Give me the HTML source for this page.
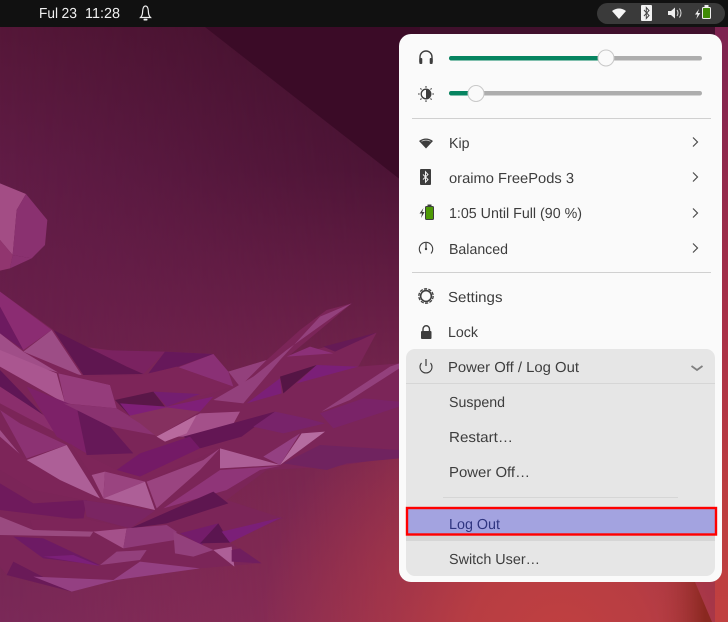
<!DOCTYPE html>
<html><head><meta charset="utf-8"><style>
html,body{margin:0;padding:0;background:#111}
svg{display:block}
text{font-family:"Liberation Sans",sans-serif;font-size:14.5px;fill:#3d3d3d;text-rendering:geometricPrecision}
</style></head><body>
<svg width="728" height="622" viewBox="0 0 728 622" xmlns="http://www.w3.org/2000/svg">
<defs>
<linearGradient id="cl" gradientUnits="userSpaceOnUse" x1="0" y1="27" x2="0" y2="622">
<stop offset="0" stop-color="#551738"/><stop offset=".24" stop-color="#611c46"/><stop offset=".63" stop-color="#6e214e"/><stop offset="1" stop-color="#7a2958"/>
</linearGradient>
<linearGradient id="cr" gradientUnits="userSpaceOnUse" x1="0" y1="27" x2="0" y2="622">
<stop offset="0" stop-color="#40102c"/><stop offset=".24" stop-color="#4c1435"/><stop offset=".5" stop-color="#6a2047"/><stop offset=".63" stop-color="#76264f"/><stop offset="1" stop-color="#8a2c52"/>
</linearGradient>
<linearGradient id="mh" gradientUnits="userSpaceOnUse" x1="0" y1="0" x2="400" y2="0"><stop offset="0" stop-color="#000"/><stop offset="1" stop-color="#fff"/></linearGradient>
<mask id="mk" maskUnits="userSpaceOnUse" x="0" y="0" width="728" height="622"><rect width="728" height="622" fill="url(#mh)"/></mask>
<linearGradient id="rgt" gradientUnits="userSpaceOnUse" x1="725" y1="30" x2="725" y2="622"><stop offset="0" stop-color="#7d2350"/><stop offset=".5" stop-color="#a93048"/><stop offset=".8" stop-color="#bd3d3f"/><stop offset="1" stop-color="#c04040"/></linearGradient>
<radialGradient id="glow" gradientUnits="userSpaceOnUse" cx="560" cy="640" r="300"><stop offset="0" stop-color="#c04040"/><stop offset=".3" stop-color="#c04040" stop-opacity=".85"/><stop offset=".55" stop-color="#c04040" stop-opacity=".5"/><stop offset="1" stop-color="#c04040" stop-opacity="0"/></radialGradient>
<linearGradient id="wdg" gradientUnits="userSpaceOnUse" x1="650" y1="0" x2="705" y2="0"><stop offset="0" stop-color="#bd4040" stop-opacity="0"/><stop offset="1" stop-color="#8a2820"/></linearGradient>
</defs>
<rect width="728" height="622" fill="url(#cl)"/>
<rect width="728" height="622" fill="url(#cr)" mask="url(#mk)"/>
<rect width="728" height="622" fill="url(#glow)"/>
<polygon points="205,27 420,27 420,195" fill="#3b0b27"/>
<rect x="715" y="27" width="13" height="595" fill="url(#rgt)"/>
<polygon points="650,582 695,582 712,622 660,622" fill="url(#wdg)"/>

<g transform="translate(0,170) scale(.33333)">
<polygon points="0,40 78,72 50,120 38,255 0,210" fill="#a34d85"/>
<polygon points="78,72 142,150 135,225 95,265 38,255 50,120" fill="#8a3170"/>
<polygon points="38,255 95,265 30,295" fill="#8a3170"/>
<polygon points="0,210 38,255 30,295 0,302" fill="#91356f"/>

<polygon points="0,365 160,480 250,530 400,550 500,545 640,552 685,605 800,570 900,480 980,420 1055,400 960,480 870,555 960,535 1130,488 1075,590 1198,580 1198,860 1000,890 800,900 680,990 850,1045 680,1110 780,1180 600,1195 350,1230 215,1265 20,1215 0,1190" fill="#7b2558"/>
<polygon points="300,540 495,545 430,612 250,530" fill="#7a2260"/>
<polygon points="160,480 250,615 430,612 380,590 250,525" fill="#5f1650"/>
<polygon points="495,545 640,552 535,590 445,610" fill="#66185a"/>
<polygon points="640,552 685,605 700,650 535,592" fill="#8a3075"/>
<polygon points="685,605 800,570 720,650" fill="#93407c"/>
<polygon points="0,365 155,480 70,540 0,410" fill="#8b2c72"/>
<polygon points="0,410 70,540 0,490" fill="#6d1a60"/>
<polygon points="155,480 245,615 175,608 70,545" fill="#9d4d86"/>
<polygon points="0,490 70,545 175,608 0,560" fill="#a04e88"/>
<polygon points="0,540 170,610 195,700 0,590" fill="#aa5690"/>
<polygon points="175,610 330,645 350,715 195,700" fill="#953c7b"/>
<polygon points="70,545 250,620 430,615 530,590 700,650 600,680 460,665 345,690 330,645 175,608" fill="#7d2559"/>
<polygon points="0,600 130,735 0,650" fill="#5f1655"/>
<polygon points="0,650 130,735 190,800 0,700" fill="#8a2e6c"/>
<polygon points="80,650 230,710 260,850 170,800" fill="#7d2168"/>
<polygon points="230,710 330,770 400,850 260,855" fill="#661858"/>
<polygon points="190,700 350,715 490,800 330,770" fill="#8a3270"/>
<polygon points="345,690 460,665 495,710 390,738" fill="#5a1748"/>
<polygon points="460,665 600,672 500,710" fill="#741e70"/>
<polygon points="360,700 500,710 640,680 600,725 390,738" fill="#7f1f78"/>
<polygon points="640,690 760,620 860,540 1055,400 960,440 840,570 730,700" fill="#93407c"/>
<polygon points="740,700 840,625 845,670" fill="#7b1f78"/>
<polygon points="840,620 950,585 850,670" fill="#551545"/>
<polygon points="950,585 1075,590 890,640" fill="#7b1f78"/>
<polygon points="860,560 930,530 1000,550" fill="#8c3078"/>
<polygon points="970,530 1130,488 1005,545" fill="#651a55"/>
<polygon points="385,738 500,712 600,725 470,800 420,760" fill="#85305f"/>
<polygon points="600,730 720,725 690,780 550,800 470,800" fill="#a4508a"/>
<polygon points="470,800 590,735 560,790 495,815" fill="#b86a9e"/>
<polygon points="550,800 825,725 725,800 600,835" fill="#631654"/>
<polygon points="350,900 420,850 570,800 600,835 420,920" fill="#741a66"/>
<polygon points="0,720 80,865 200,825 60,760" fill="#8c3273"/>
<polygon points="0,780 70,865 0,820" fill="#a04e88"/>
<polygon points="210,820 260,855 350,900 420,920 600,835 660,835 440,935 315,905 275,915" fill="#7d2559"/>
<polygon points="0,800 80,870 180,930 310,985 465,1022 250,990 100,960 0,900" fill="#7d2559"/>
<polygon points="80,870 200,825 300,985 180,930" fill="#ad5f97"/>
<polygon points="275,915 315,905 310,985" fill="#a4508a"/>
<polygon points="315,905 435,935 310,985" fill="#9a4480"/>
<polygon points="310,985 435,935 465,1020" fill="#ad5f97"/>
<polygon points="440,935 610,870 660,835 600,900 470,1015" fill="#9a4480"/>
<polygon points="490,1015 660,900 840,888 780,900 680,960" fill="#8f3578"/>
<polygon points="660,835 840,885 660,895" fill="#ad5f97"/>
<polygon points="790,860 900,790 840,885" fill="#944082"/>
<polygon points="840,885 905,790 975,785" fill="#b56ca0"/>
<polygon points="850,880 960,825 1198,840 1198,865 1040,880 980,900" fill="#70235f"/>
<polygon points="960,730 1090,685 1198,695 1198,710 1000,775" fill="#7a2368"/>
<polygon points="965,725 1170,590 1198,580 1198,595 1050,690" fill="#93407c"/>
<polygon points="760,770 825,725 920,745 975,760 850,790" fill="#78236a"/>
<polygon points="0,940 100,1000 260,990 250,1050 0,1020" fill="#6f1a5c"/>
<polygon points="250,990 465,1022 390,1075 260,1040" fill="#7a2562"/>
<polygon points="390,1075 640,965 685,1000 500,1060" fill="#5e1650"/>
<polygon points="90,1050 250,1045 390,1075 280,1085 100,1080" fill="#7d2559"/>
<polygon points="0,1040 100,1080 280,1085 270,1100 0,1095" fill="#9a4a80"/>
<polygon points="280,1085 380,1075 370,1135" fill="#a4508a"/>
<polygon points="380,1075 500,1065 530,1085 525,1110 370,1135" fill="#8f3a78"/>
<polygon points="540,1090 655,1060 605,1125" fill="#741c6a"/>
<polygon points="600,1120 655,1060 690,1118" fill="#5b1550"/>
<polygon points="665,1085 845,1042 690,1118" fill="#7b1f78"/>
<polygon points="520,1085 640,1140 580,1160 525,1150" fill="#93407c"/>
<polygon points="640,1140 695,1130 703,1190" fill="#ad5f97"/>
<polygon points="695,1140 720,1135 785,1180 695,1175" fill="#701e5e"/>
<polygon points="40,1100 130,1105 300,1185 130,1165" fill="#6d1a64"/>
<polygon points="130,1160 220,1155 300,1188" fill="#7b1f78"/>
<polygon points="300,1185 350,1145 440,1140 420,1170" fill="#93407c"/>
<polygon points="20,1215 40,1175 215,1265" fill="#6a1a58"/>
<polygon points="100,1220 340,1230 420,1175 600,1195 350,1230 215,1265" fill="#944082"/>
</g>

<!-- top bar -->
<rect width="728" height="27" fill="#111"/>
<text x="39" y="18" textLength="19" lengthAdjust="spacingAndGlyphs" style="fill:#f0f0f0">Ful</text>
<text x="61.500" y="18" textLength="15.500" lengthAdjust="spacingAndGlyphs" style="fill:#f0f0f0">23</text>
<text x="85" y="18" textLength="35" lengthAdjust="spacingAndGlyphs" style="fill:#f0f0f0">11:28</text>
<path d="M140.500 17.500 c2-2 2-4 2.200-7 c.3-3 1.500-4.500 2.800-4.500 s2.500 1.500 2.800 4.500 c.2 3 .2 5 2.200 7z" fill="none" stroke="#eee" stroke-width="1.200"/>
<rect x="143.500" y="18.800" width="4" height="1.700" rx=".8" fill="#eee"/>

<rect x="597" y="3" width="128" height="21" rx="10.500" fill="#3a3a3a"/>
<path d="M612 11 q7-5 14 0 l-7 8z" fill="#f5f5f5"/>
<rect x="641" y="5" width="11" height="16" rx="1" fill="#f2f2f2"/>
<path d="M644 10 l5 5.500 -2.700 3 v-11 l2.700 3 -5 5.500" fill="none" stroke="#444" stroke-width="1"/>
<path d="M668 11 h3 l4-3.500 v11 l-4-3.500 h-3z" fill="#eee"/>
<path d="M677 10 q2 3 0 6 M679.500 8.500 q3 4.500 0 9" fill="none" stroke="#ddd" stroke-width="1"/>
<path d="M699 9 l-4 5.500 h2.500 l-1.200 4.500 4-6 h-2.500z" fill="#eee"/>
<rect x="702.500" y="7.500" width="8" height="11" rx="1" fill="#3f8a06" stroke="#eee" stroke-width="1"/>
<rect x="704.500" y="5" width="4" height="2" fill="#eee"/>

<!-- menu -->
<rect x="399" y="34" width="323" height="548" rx="12" fill="#fafafa"/>

<!-- sliders -->
<rect x="449" y="56" width="253" height="4.500" rx="2.200" fill="#adadad"/>
<rect x="449" y="56" width="157" height="4.500" rx="2.200" fill="#068460"/>
<circle cx="606" cy="58" r="8" fill="#fafafa" stroke="#c8c8c8" stroke-width="1"/>
<rect x="449" y="91" width="253" height="4.500" rx="2.200" fill="#adadad"/>
<rect x="449" y="91" width="27" height="4.500" rx="2.200" fill="#068460"/>
<circle cx="476" cy="93.500" r="8" fill="#fafafa" stroke="#c8c8c8" stroke-width="1"/>

<!-- headphone -->
<path d="M420 62 v-5 a6 6 0 0 1 12 0 v5" fill="none" stroke="#3d3d3d" stroke-width="1.400"/>
<rect x="419.300" y="58" width="3" height="6" rx="1" fill="#3d3d3d"/>
<rect x="429.700" y="58" width="3" height="6" rx="1" fill="#3d3d3d"/>
<!-- brightness -->
<circle cx="426" cy="94" r="4.800" fill="#fafafa" stroke="#3d3d3d" stroke-width="1.300"/>
<path d="M426 89.200 a4.800 4.800 0 0 1 0 9.600z" fill="#3d3d3d"/>
<path d="M426 86 v1.700 M426 100.300 v1.700 M418 94 h1.700 M432.300 94 h1.700 M420.400 88.400 l1.100 1.100 M430.500 98.500 l1.100 1.100 M420.400 99.600 l1.100-1.100 M430.500 89.500 l1.100-1.100" stroke="#3d3d3d" stroke-width="1.100"/>

<rect x="412" y="118" width="299" height="1" fill="#d0d0d0"/>

<!-- wifi -->
<path d="M419 141 q7-5 14 0 l-7 7.500z" fill="#3d3d3d"/>
<path d="M421.500 141.300 q4.500-2.300 9 0" fill="none" stroke="#d8d8d8" stroke-width=".7"/>
<!-- bt -->
<rect x="420" y="169" width="11" height="16" rx="1" fill="#3d3d3d"/>
<path d="M423 174.500 l5 5 -2.500 2.700 v-10.400 l2.500 2.700 -5 5" fill="none" stroke="#f2f2f2" stroke-width="1"/>
<!-- battery -->
<path d="M423.500 208 l-4 5.500 h2.500 l-1 4.500 3.600-6 h-2.400z" fill="#3d3d3d"/>
<rect x="425.500" y="206.500" width="8" height="13" rx="1" fill="#4e9a06" stroke="#3d3d3d" stroke-width="1"/>
<rect x="427.500" y="204.500" width="4" height="2" fill="#3d3d3d"/>
<!-- power mode -->
<path d="M421 253.500 A6.700 6.700 0 1 1 431 253.500" fill="none" stroke="#3d3d3d" stroke-width="1.100"/>
<path d="M426 243 v5" stroke="#3d3d3d" stroke-width="1.200"/><circle cx="426" cy="249" r="1.200" fill="#3d3d3d"/>

<text x="449" y="148" textLength="20.500" lengthAdjust="spacingAndGlyphs">Kip</text>
<text x="449" y="183" textLength="125" lengthAdjust="spacingAndGlyphs">oraimo FreePods 3</text>
<text x="449" y="218" textLength="133" lengthAdjust="spacingAndGlyphs">1:05 Until Full (90 %)</text>
<text x="449" y="254" textLength="59" lengthAdjust="spacingAndGlyphs">Balanced</text>

<g fill="none" stroke="#4a4a4a" stroke-width="1.200">
<path d="M693 137.500 l4.500 4.500 -4.500 4.500"/>
<path d="M693 172.500 l4.500 4.500 -4.500 4.500"/>
<path d="M693 208.500 l4.500 4.500 -4.500 4.500"/>
<path d="M693 243.500 l4.500 4.500 -4.500 4.500"/>
</g>

<rect x="412" y="272" width="299" height="1" fill="#d0d0d0"/>

<!-- settings gear -->
<circle cx="426" cy="296" r="5.400" fill="none" stroke="#3d3d3d" stroke-width="1.600"/>
<circle cx="426" cy="296" r="7.200" fill="none" stroke="#3d3d3d" stroke-width="1.300" stroke-dasharray="3.200 1.320"/>
<!-- lock -->
<rect x="421" y="331" width="10.500" height="8" rx="1" fill="#3d3d3d"/>
<path d="M423 331 v-2 a3.200 3.200 0 0 1 6.500 0 v2" fill="none" stroke="#3d3d3d" stroke-width="1.400"/>

<text x="448" y="302" textLength="54.500" lengthAdjust="spacingAndGlyphs">Settings</text>
<text x="448" y="337" textLength="30" lengthAdjust="spacingAndGlyphs">Lock</text>

<!-- submenu -->
<rect x="406" y="349" width="309" height="227" rx="9" fill="#e6e6e6"/>
<rect x="406" y="383" width="309" height="1" fill="#d6d6d6"/>
<path d="M421.500 363 a6 6 0 1 0 9 0" fill="none" stroke="#3d3d3d" stroke-width="1.100"/>
<path d="M426 359 v7" stroke="#3d3d3d" stroke-width="1.200"/>
<text x="448" y="372" textLength="131" lengthAdjust="spacingAndGlyphs">Power Off / Log Out</text>
<path d="M691.500 366 l5.500 4 5.500-4" fill="none" stroke="#808080" stroke-width="1.800"/>
<text x="449" y="407" textLength="56" lengthAdjust="spacingAndGlyphs">Suspend</text>
<text x="449" y="442" textLength="64" lengthAdjust="spacingAndGlyphs">Restart…</text>
<text x="449" y="477" textLength="81" lengthAdjust="spacingAndGlyphs">Power Off…</text>
<rect x="443" y="497" width="235" height="1" fill="#d6d6d6"/>

<rect x="406" y="507" width="309" height="34" fill="#d6d6d6"/>
<rect x="407" y="508" width="309" height="26.500" fill="#a3a3e0" stroke="#f00" stroke-width="2.400"/>
<text x="449" y="529" textLength="51" lengthAdjust="spacingAndGlyphs" style="fill:#2f3580">Log Out</text>
<text x="449" y="564" textLength="91" lengthAdjust="spacingAndGlyphs">Switch User…</text>
</svg>
</body></html>
